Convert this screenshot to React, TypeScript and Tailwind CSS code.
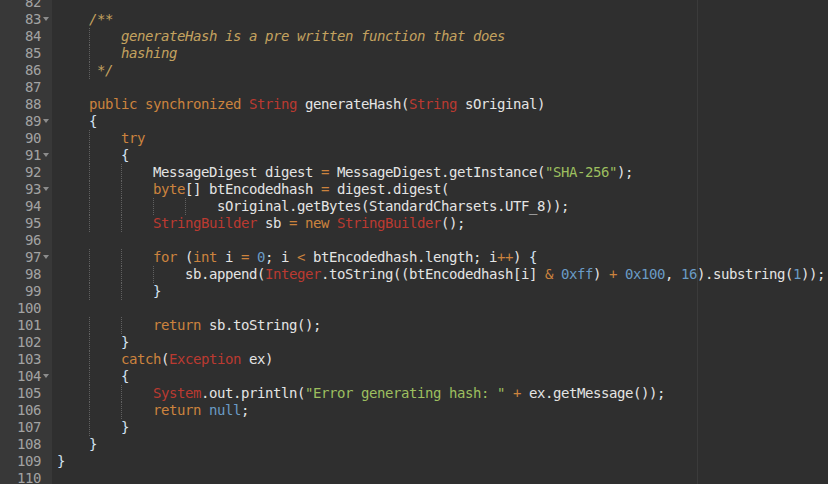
import React from "react";

type Tok = [string, string];

const colors: Record<string, string> = {
  p: "text-[#e4e4e4]",
  k: "text-[#cc833e]",
  o: "text-[#cc833e]",
  t: "text-[#bb3a31]",
  s: "text-[#9dbf5f]",
  n: "text-[#6a9bc6]",
  c: "text-[#c4a25f] italic",
  b: "text-[#d4e4f4]",
};

type Line = { no: number; indent: number; fold?: boolean; toks: Tok[] };

const lines: Line[] = [
  { no: 82, indent: 0, toks: [] },
  { no: 83, indent: 4, fold: true, toks: [["/**", "c"]] },
  { no: 84, indent: 8, toks: [["generateHash is a pre written function that does", "c"]] },
  { no: 85, indent: 8, toks: [["hashing", "c"]] },
  { no: 86, indent: 5, toks: [["*/", "c"]] },
  { no: 87, indent: 0, toks: [] },
  {
    no: 88,
    indent: 4,
    toks: [
      ["public", "k"], [" ", "p"], ["synchronized", "k"], [" ", "p"], ["String", "t"],
      [" generateHash(", "p"], ["String", "t"], [" sOriginal)", "p"],
    ],
  },
  { no: 89, indent: 4, fold: true, toks: [["{", "b"]] },
  { no: 90, indent: 8, toks: [["try", "k"]] },
  { no: 91, indent: 8, fold: true, toks: [["{", "b"]] },
  {
    no: 92,
    indent: 12,
    toks: [
      ["MessageDigest digest ", "p"], ["=", "o"], [" MessageDigest.getInstance(", "p"],
      ['"SHA-256"', "s"], [");", "p"],
    ],
  },
  {
    no: 93,
    indent: 12,
    fold: true,
    toks: [["byte", "k"], ["[] btEncodedhash ", "p"], ["=", "o"], [" digest.digest(", "p"]],
  },
  { no: 94, indent: 20, toks: [["sOriginal.getBytes(StandardCharsets.UTF_8));", "p"]] },
  {
    no: 95,
    indent: 12,
    toks: [
      ["StringBuilder", "t"], [" sb ", "p"], ["=", "o"], [" ", "p"], ["new", "k"], [" ", "p"],
      ["StringBuilder", "t"], ["();", "p"],
    ],
  },
  { no: 96, indent: 0, toks: [] },
  {
    no: 97,
    indent: 12,
    fold: true,
    toks: [
      ["for", "k"], [" (", "p"], ["int", "k"], [" i ", "p"], ["=", "o"], [" ", "p"], ["0", "n"],
      ["; i ", "p"], ["<", "o"], [" btEncodedhash.length; i", "p"], ["++", "o"], [") ", "p"], ["{", "b"],
    ],
  },
  {
    no: 98,
    indent: 16,
    toks: [
      ["sb.append(", "p"], ["Integer", "t"], [".toString((btEncodedhash[i] ", "p"], ["&", "o"], [" ", "p"],
      ["0xff", "n"], [") ", "p"], ["+", "o"], [" ", "p"], ["0x100", "n"], [", ", "p"], ["16", "n"],
      [").substring(", "p"], ["1", "n"], ["));", "p"],
    ],
  },
  { no: 99, indent: 12, toks: [["}", "b"]] },
  { no: 100, indent: 0, toks: [] },
  { no: 101, indent: 12, toks: [["return", "k"], [" sb.toString();", "p"]] },
  { no: 102, indent: 8, toks: [["}", "b"]] },
  { no: 103, indent: 8, toks: [["catch", "k"], ["(", "p"], ["Exception", "t"], [" ex)", "p"]] },
  { no: 104, indent: 8, fold: true, toks: [["{", "b"]] },
  {
    no: 105,
    indent: 12,
    toks: [
      ["System", "t"], [".out.println(", "p"], ['"Error generating hash: "', "s"], [" ", "p"],
      ["+", "o"], [" ex.getMessage());", "p"],
    ],
  },
  { no: 106, indent: 12, toks: [["return", "k"], [" ", "p"], ["null", "n"], [";", "p"]] },
  { no: 107, indent: 8, toks: [["}", "b"]] },
  { no: 108, indent: 4, toks: [["}", "b"]] },
  { no: 109, indent: 0, toks: [["}", "b"]] },
  { no: 110, indent: 0, toks: [] },
];

const widths: Record<number, string> = {
  8: "w-[8px]",
  16: "w-[16px]",
  24: "w-[24px]",
  32: "w-[32px]",
};

function Indent({ n }: { n: number }) {
  const blocks: { w: number; guide: boolean }[] = [];
  for (let col = 0; col < n; col += 4) {
    blocks.push({ w: Math.min(4, n - col) * 8, guide: col > 0 });
  }
  return (
    <>
      {blocks.map((b, i) => (
        <span
          key={i}
          className={`${widths[b.w]} shrink-0 h-full ${
            b.guide ? "border-l border-dotted border-[#616161]" : ""
          }`}
        />
      ))}
    </>
  );
}

export default function App() {
  return (
    <div
      className="w-[828px] h-[484px] overflow-hidden bg-[#2f2f2f] flex text-[14px] tracking-[-0.43px]"
      style={{ fontFamily: '"DejaVu Sans Mono", "Liberation Mono", monospace' }}
    >
      <div className="w-[52px] shrink-0 bg-[#383838] -mt-[6px]">
        {lines.map((l) => (
          <div key={l.no} className="flex h-[17px] leading-[17px] items-center">
            <span className="w-[41px] text-right text-[#a3a3a3]">{l.no}</span>
            <span className="w-[11px] flex items-center pl-[2px]">
              {l.fold && (
                <svg width="6" height="4" viewBox="0 0 6 4" className="-mt-px">
                  <path d="M0 0 L6 0 L3 4 Z" fill="#8c8c8c" />
                </svg>
              )}
            </span>
          </div>
        ))}
      </div>
      <div className="relative flex-1 pl-[5px]">
        <div className="absolute top-0 bottom-0 left-[645px] w-px bg-[#3b3b3b]" />
        <div className="-mt-[6px]">
          {lines.map((l) => (
            <div key={l.no} className="flex h-[17px] leading-[17px] whitespace-pre">
              {l.toks.length > 0 && <Indent n={l.indent} />}
              <span>
                {l.toks.map(([t, k], i) => (
                  <span key={i} className={colors[k]}>
                    {t}
                  </span>
                ))}
              </span>
            </div>
          ))}
        </div>
      </div>
    </div>
  );
}
